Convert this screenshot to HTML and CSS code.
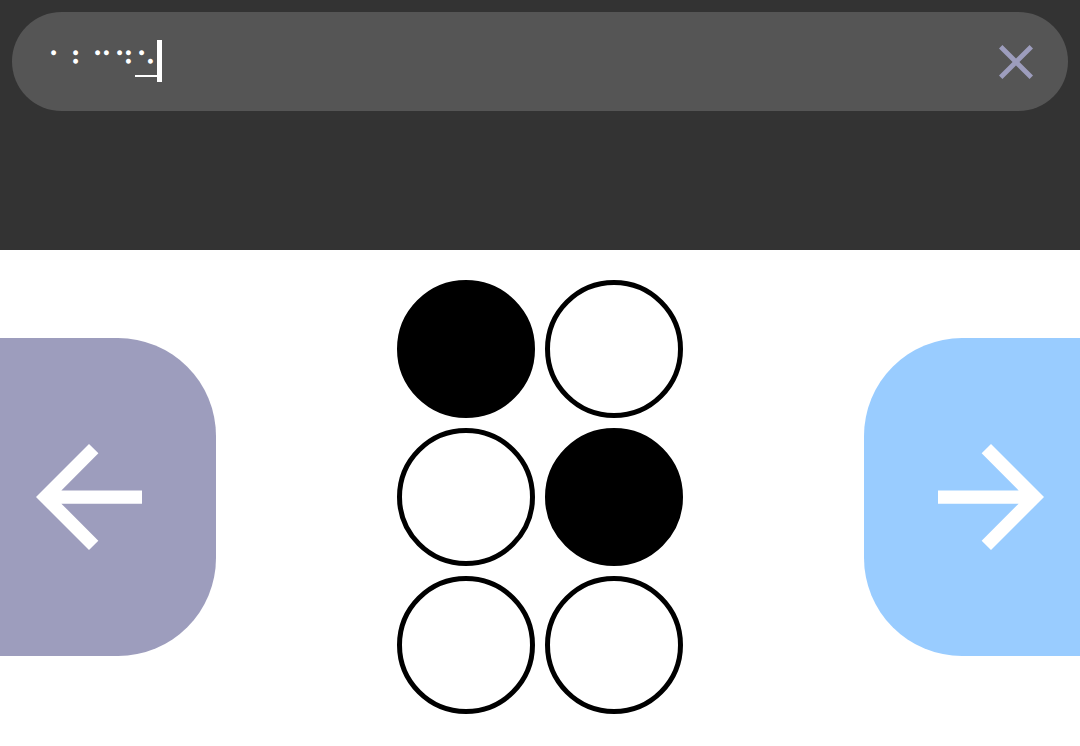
FILE: index.html
```html
<!DOCTYPE html>
<html lang="en">
<head>
    <meta charset="UTF-8">
    <meta name="viewport" content="width=device-width, initial-scale=1.0">
    <title>Braille keyboard</title>
    <link rel="stylesheet" href="styles.css">
</head>
<body>

    <header class="display">
        <div class="field">
            <div class="entry">
                <input type="text" class="text" aria-label="Braille text" value="⠁⠃⠉⠙⠑">
                <span class="current"></span>
                <span class="caret"></span>
            </div>
            <button class="clear" aria-label="Clear">
                <svg viewBox="5 5 14 14"><path d="M19 6.41L17.59 5 12 10.59 6.41 5 5 6.41 10.59 12 5 17.59 6.41 19 12 13.41 17.59 19 19 17.59 13.41 12z"/></svg>
            </button>
        </div>
    </header>

    <main class="keyboard">
        <button class="side back" aria-label="Back">
            <svg viewBox="4 4 16 16"><path d="M20 11H7.83l5.59-5.59L12 4l-8 8 8 8 1.41-1.41L7.83 13H20v-2z"/></svg>
        </button>

        <!-- one braille cell, dots 1-3 on the left, 4-6 on the right -->
        <div class="cell">
            <input type="checkbox" class="dot" aria-label="Dot 1" checked>
            <input type="checkbox" class="dot" aria-label="Dot 4">
            <input type="checkbox" class="dot" aria-label="Dot 2">
            <input type="checkbox" class="dot" aria-label="Dot 5" checked>
            <input type="checkbox" class="dot" aria-label="Dot 3">
            <input type="checkbox" class="dot" aria-label="Dot 6">
        </div>

        <button class="side next" aria-label="Next">
            <svg viewBox="4 4 16 16"><path d="M12 4l-1.41 1.41L16.17 11H4v2h12.17l-5.58 5.59L12 20l8-8z"/></svg>
        </button>
    </main>

</body>
</html>
```
FILE: styles.css
```css
* {
    box-sizing: border-box;
}

body {
    margin: 0;
    background-color: white;
    font-family: "DejaVu Serif", serif;
}

button {
    border: none;
    padding: 0;
    cursor: pointer;
}

svg {
    display: block;
    width: 100%;
    fill: currentColor;
}

.display {
    min-height: 250px;
    padding: 12px;
    background-color: #333;
}

.field {
    display: flex;
    align-items: center;
    justify-content: space-between;
    padding: 28px 35px;
    border-radius: 50px;
    background-color: #555;
}

.entry {
    position: relative;
    display: flex;
    align-items: flex-start;
}

.text {
    field-sizing: content;
    height: 43px;
    margin: 0;
    padding: 4px 0 0;
    border: none;
    outline: none;
    background: none;
    color: white;
    font-family: inherit;
    font-size: 30px;
}

/* underline below the character being edited */
.current {
    position: absolute;
    right: 5px;
    bottom: 6px;
    width: 22px;
    height: 2px;
    background-color: white;
}

.caret {
    width: 5px;
    height: 42px;
    background-color: white;
}

.clear {
    width: 34px;
    background: none;
    color: #9d9dbd;
}

.keyboard {
    display: flex;
    align-items: center;
    justify-content: space-between;
    padding: 30px 0;
}

.side {
    display: flex;
    align-items: center;
    width: 20%;
    height: 318px;
    padding: 0 36px;
    color: white;
}

.side svg {
    width: 106px;
}

.back {
    border-radius: 0 98px 98px 0;
    background-color: #9d9dbd;
}

.next {
    justify-content: flex-end;
    border-radius: 98px 0 0 98px;
    background-color: #9cf;
}

.cell {
    display: grid;
    grid-template-columns: auto auto;
    gap: 10px;
}

.dot {
    appearance: none;
    width: 138px;
    height: 138px;
    margin: 0;
    border: 5px solid black;
    border-radius: 50%;
    background-color: white;
    cursor: pointer;
}

.dot:checked {
    background-color: black;
}
```
